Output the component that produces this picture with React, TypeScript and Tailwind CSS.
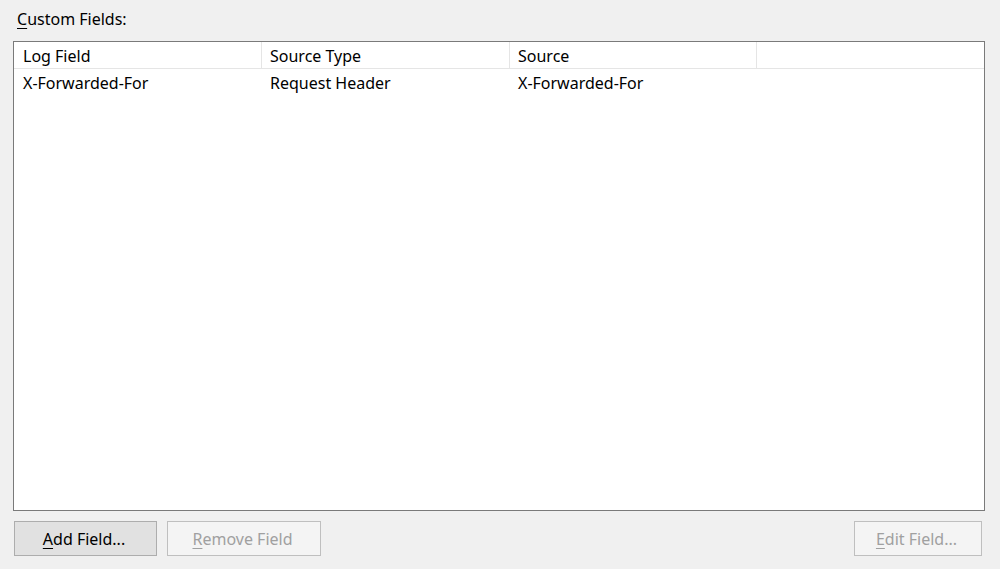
import React from 'react';

const columns = ['Log Field', 'Source Type', 'Source'];

const rows = [['X-Forwarded-For', 'Request Header', 'X-Forwarded-For']];

const Mnemonic = ({ text }: { text: string }) => (
    <>
        <span className="underline underline-offset-[3px] decoration-1">{text[0]}</span>
        {text.slice(1)}
    </>
);

const App = () => {
    return (
        <div
            className="w-[1000px] h-[569px] bg-[#f0f0f0] flex flex-col px-[13px] text-[16px] text-black"
            style={{ fontFamily: '"Noto Sans", "Open Sans", sans-serif' }}
        >
            <div className="pt-[8px] pl-[4px] h-[41px] leading-[22px]">
                <Mnemonic text="Custom Fields:" />
            </div>

            {/* List view */}
            <div className="w-[972px] h-[470px] border border-[#7a7a7a] bg-white flex flex-col">
                <div className="flex h-[27px] border-b border-[#e5e5e5] items-center">
                    {columns.map((col, i) => (
                        <div
                            key={col}
                            className={`h-full flex items-center pt-[2px] border-r border-[#e5e5e5] ${i === 0 ? 'pl-[9px]' : 'pl-[8px]'} ${i === 2 ? 'w-[247px]' : 'w-[248px]'}`}
                        >
                            {col}
                        </div>
                    ))}
                </div>
                {rows.map((row) => (
                    <div key={row[0]} className="flex h-[28px] items-center">
                        {row.map((cell, i) => (
                            <div
                                key={i}
                                className={`w-[248px] ${i === 0 ? 'pl-[9px]' : 'pl-[8px]'}`}
                            >
                                {cell}
                            </div>
                        ))}
                    </div>
                ))}
            </div>

            {/* Buttons */}
            <div className="flex mt-[10px] h-[35px]">
                <button className="w-[143px] h-[35px] ml-[1px] pr-[3px] border border-[#adadad] bg-[#e1e1e1] text-black">
                    <Mnemonic text="Add Field..." />
                </button>
                <button className="w-[154px] h-[35px] ml-[10px] pr-[3px] border border-[#bfbfbf] bg-[#f4f4f4] text-[#a0a0a0]">
                    <Mnemonic text="Remove Field" />
                </button>
                <div className="flex-1" />
                <button className="w-[128px] h-[35px] mr-[5px] pr-[3px] border border-[#bfbfbf] bg-[#f4f4f4] text-[#a0a0a0]">
                    <Mnemonic text="Edit Field..." />
                </button>
            </div>
        </div>
    );
};

export default App;
